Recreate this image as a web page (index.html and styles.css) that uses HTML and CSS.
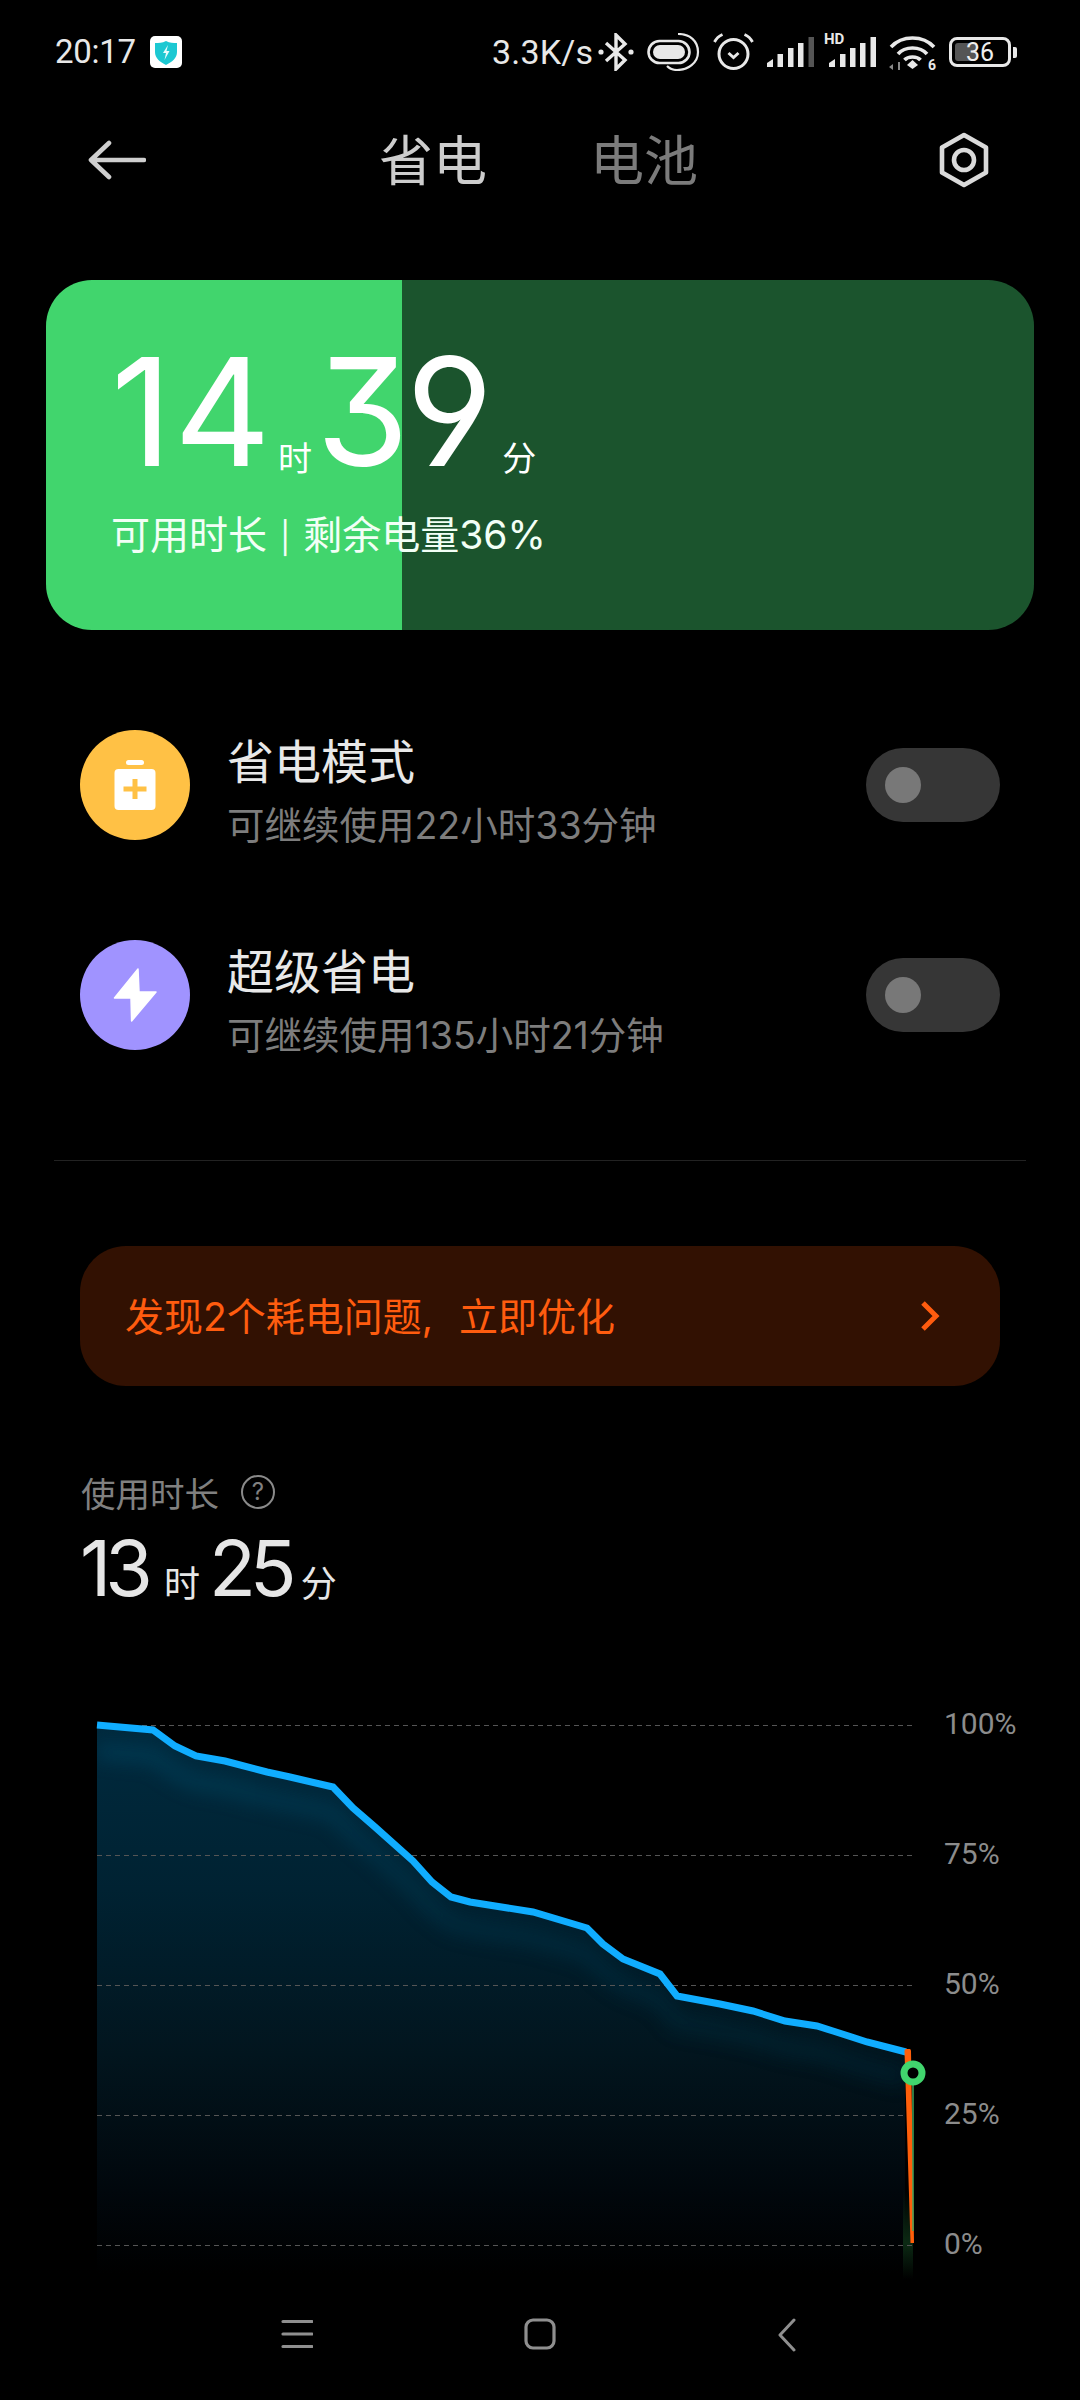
FILE: index.html
```html
<!DOCTYPE html>
<html lang="zh">
<head>
<meta charset="utf-8">
<title>省电</title>
<link rel="stylesheet" href="styles.css">
</head>
<body>
<div class="page">
  <div class="status">
    <span class="clock">20:17</span>
    <span class="shield-box">
      <svg width="32" height="32" viewBox="0 0 32 32"><path d="M16 5 C20 7 23 7 27 7 V16 C27 22 22 26 16 29 C10 26 5 22 5 16 V7 C9 7 12 7 16 5Z" fill="#1cc8d2"/><path d="M18 9 L13 17 H16 L14.5 24 L19.5 15 H16.5Z" fill="#e8fbfc"/></svg>
    </span>
    <span class="status-fill"></span>
    <span class="speed">3.3K/s</span>
    <svg class="st-bt" width="36" height="38" viewBox="0 0 36 38"><path d="M8 10 L27 27 L18 36 V2 L27 11 L8 28" fill="none" stroke="#e8e8e8" stroke-width="3.4"/><circle cx="3" cy="19" r="2.6" fill="#e8e8e8"/><circle cx="33" cy="19" r="2.6" fill="#e8e8e8"/></svg>
    <svg width="53" height="38" viewBox="0 0 53 38"><rect x="1.5" y="8" width="41" height="22" rx="11" fill="none" stroke="#e8e8e8" stroke-width="2.6"/><rect x="6" y="12" width="32" height="14" rx="7" fill="#e8e8e8"/><path d="M31 1 C43 1 51 8 51 19 C51 30 41 37 30 37 C26 37 23 36 20 33" fill="none" stroke="#e8e8e8" stroke-width="2.2"/></svg>
    <svg width="41" height="38" viewBox="0 0 41 38"><circle cx="20.5" cy="21" r="14.5" fill="none" stroke="#e8e8e8" stroke-width="3"/><path d="M15.5 20 L20.5 24.5 L25.5 20" fill="none" stroke="#e8e8e8" stroke-width="3"/><path d="M1.5 9 C3 6 5 3.500 9.500 1.500 M39.500 9 C38 6 36 3.500 31.500 1.500" fill="none" stroke="#e8e8e8" stroke-width="2.8"/></svg>
    <svg width="47" height="32" viewBox="0 0 47 32"><path d="M0 31 V27 L6 23 V31Z M10.500 31 V18 H16 V31Z M21 31 V12 H26.500 V31Z M31 31 V7 H36.500 V31Z" fill="#e8e8e8"/><path d="M41.500 31 V1 H47 V31Z" fill="#555"/></svg>
    <span class="sig-hd">
      <span class="hd">HD</span>
      <svg width="49" height="32" viewBox="0 0 49 32"><path d="M2 31 V27 L8 23 V31Z M13 31 V18 H18.500 V31Z M23 31 V12 H28.500 V31Z M33 31 V7 H38.500 V31Z M43.500 31 V1 H49 V31Z" fill="#e8e8e8"/></svg>
    </span>
    <span class="wifi">
      <svg width="47" height="36" viewBox="0 0 47 36"><path d="M2 13 C13 1 34 1 45 13 M9 20 C16 12 31 12 38 20 M15.500 26 C19 22 28 22 31.500 26" fill="none" stroke="#e8e8e8" stroke-width="3.600"/><path d="M23.500 26 L29 31 L23.500 35 L18 31Z" fill="#e8e8e8"/><path d="M4 30 V36 L0 33Z M9 28 H11 V36 H9Z" fill="#888"/></svg>
      <span class="wifi-six">6</span>
    </span>
    <span class="battery">
      <span class="battery-body"><span class="battery-level"></span><span class="battery-num">36</span></span>
      <span class="battery-nub"></span>
    </span>
  </div>

  <div class="header">
    <svg class="back" width="58" height="40" viewBox="0 0 58 40"><path d="M21 3 L3 20 L21 37 M3 20 H56" fill="none" stroke="#cfcfcf" stroke-width="4.600" stroke-linecap="round" stroke-linejoin="round"/></svg>
    <span class="tab tab-on">省电</span>
    <span class="tab tab-off">电池</span>
    <svg class="gear" width="50" height="56" viewBox="0 0 50 56"><path d="M25 3 L47 15.500 V40.500 L25 53 L3 40.500 V15.500Z" fill="none" stroke="#dadada" stroke-width="4.600" stroke-linejoin="round"/><circle cx="25" cy="28" r="10" fill="none" stroke="#dadada" stroke-width="4.600"/></svg>
  </div>

  <div class="card">
    <div class="card-time">
      <span class="big big-h">14</span><span class="unit unit-h">时</span><span class="big big-m">39</span><span class="unit unit-m">分</span>
    </div>
    <div class="card-sub">可用时长 <span class="sep">|</span> 剩余电量36%</div>
  </div>

  <div class="row row-first">
    <span class="circle circle-yellow">
      <svg width="110" height="110" viewBox="0 0 110 110"><rect x="46" y="30" width="18" height="5" rx="2.500" fill="#fff"/><rect x="34.500" y="39" width="41" height="41" rx="4" fill="#fff"/><path d="M43.500 59 H66.500 M55 49 V69" stroke="#ffc145" stroke-width="5"/></svg>
    </span>
    <div class="row-text">
      <div class="row-title">省电模式</div>
      <div class="row-sub">可继续使用22小时33分钟</div>
    </div>
    <span class="toggle"><span class="knob"></span></span>
  </div>

  <div class="row row-second">
    <span class="circle circle-purple">
      <svg width="110" height="110" viewBox="0 0 110 110"><path d="M58 29 L34.500 58 H51 L51.600 81 L76 52 H59Z" fill="#fff" stroke="#fff" stroke-width="1.500" stroke-linejoin="round"/></svg>
    </span>
    <div class="row-text">
      <div class="row-title">超级省电</div>
      <div class="row-sub">可继续使用135小时21分钟</div>
    </div>
    <span class="toggle"><span class="knob"></span></span>
  </div>

  <div class="divider"></div>

  <div class="banner">
    <span class="banner-text">发现2个耗电问题, 立即优化</span>
    <svg width="20" height="32" viewBox="0 0 20 32"><path d="M3 3 L16 16 L3 29" fill="none" stroke="#ff5c0f" stroke-width="5"/></svg>
  </div>

  <div class="usage-label">
    <span>使用时长</span>
    <span class="help">?</span>
  </div>
  <div class="usage-value">
    <span class="val">13</span><span class="val-unit">时</span><span class="val val-m">25</span><span class="val-unit val-unit-m">分</span>
  </div>

  <svg class="chart" width="1080" height="590" viewBox="0 1700 1080 590">
    <defs>
      <linearGradient id="areaFill" gradientUnits="userSpaceOnUse" x1="0" y1="1726" x2="0" y2="2275">
        <stop offset="0" stop-color="#002a3e"/>
        <stop offset="0.3" stop-color="#002232"/>
        <stop offset="0.6" stop-color="#02151e"/>
        <stop offset="0.85" stop-color="#01070c"/>
        <stop offset="1" stop-color="#000"/>
      </linearGradient>
      <linearGradient id="glowStroke" gradientUnits="userSpaceOnUse" x1="0" y1="1740" x2="0" y2="2090">
        <stop offset="0" stop-color="#064a68"/>
        <stop offset="1" stop-color="#032a3a"/>
      </linearGradient>
      <linearGradient id="greenFade" x1="0" y1="0" x2="0" y2="1">
        <stop offset="0" stop-color="#0c2a14" stop-opacity="0"/>
        <stop offset="0.6" stop-color="#0c2a14"/>
        <stop offset="1" stop-color="#0c2a14" stop-opacity="0"/>
      </linearGradient>
      <filter id="soft" x="-10%" y="-10%" width="120%" height="120%"><feGaussianBlur stdDeviation="9"/></filter>
      <clipPath id="areaClip"><path d="M97 1726 L153 1731 L175 1747 L196 1757 L225 1762 L267 1773 L290 1778 L333 1788 L353 1809 L375 1828 L413 1862 L432 1883 L451 1898 L470 1903 L533 1913 L587 1929 L603 1945 L623 1960 L660 1975 L677 1997 L720 2005 L753 2012 L785 2022 L817 2027 L833 2032 L867 2043 L905 2053 V2280 H97Z"/></clipPath>
    </defs>
    <path d="M97 1726 L153 1731 L175 1747 L196 1757 L225 1762 L267 1773 L290 1778 L333 1788 L353 1809 L375 1828 L413 1862 L432 1883 L451 1898 L470 1903 L533 1913 L587 1929 L603 1945 L623 1960 L660 1975 L677 1997 L720 2005 L753 2012 L785 2022 L817 2027 L833 2032 L867 2043 L905 2053 V2280 H97Z" fill="url(#areaFill)"/>
    <g clip-path="url(#areaClip)">
      <path d="M97 1752 L153 1757 L175 1773 L196 1783 L225 1788 L267 1799 L290 1804 L333 1814 L353 1835 L375 1854 L413 1888 L432 1909 L451 1924 L470 1929 L533 1939 L587 1955 L603 1971 L623 1986 L660 2001 L677 2023 L720 2031 L753 2038 L785 2048 L817 2053 L833 2058 L867 2069 L905 2079" fill="none" stroke="url(#glowStroke)" stroke-width="18" filter="url(#soft)" opacity="0.45"/>
    </g>
    <rect x="903" y="2190" width="10" height="90" fill="url(#greenFade)"/>
    <g class="grid">
      <path d="M97 1726.500 H913"/>
      <path d="M97 1856.500 H913"/>
      <path d="M97 1986.500 H913"/>
      <path d="M97 2116.500 H905"/>
      <path d="M97 2246.500 H913"/>
    </g>
    <path d="M97 1726 L153 1731 L175 1747 L196 1757 L225 1762 L267 1773 L290 1778 L333 1788 L353 1809 L375 1828 L413 1862 L432 1883 L451 1898 L470 1903 L533 1913 L587 1929 L603 1945 L623 1960 L660 1975 L677 1997 L720 2005 L753 2012 L785 2022 L817 2027 L833 2032 L867 2043 L906 2053" fill="none" stroke="#10adff" stroke-width="7"/>
    <path d="M904.500 2052 Q904.500 2050 906 2050 H909.500 Q911 2050 911 2052 L914 2244 H910.500Z" fill="#ff5f0a"/>
    <path d="M913 2074 V2232" stroke="#3fa55c" stroke-width="1.500"/>
    <circle cx="913" cy="2074" r="9" fill="#000" stroke="#41d56d" stroke-width="7"/>
    <text class="axis" x="944" y="1735">100%</text>
    <text class="axis" x="944" y="1865">75%</text>
    <text class="axis" x="944" y="1995">50%</text>
    <text class="axis" x="944" y="2125">25%</text>
    <text class="axis" x="944" y="2255">0%</text>
  </svg>

  <div class="nav">
    <svg class="nav-menu" width="32" height="32" viewBox="0 0 32 32"><path d="M2 3.500 H31 M2 16 H31 M2 28.500 H31" stroke="#8f8f8f" stroke-width="3.200" stroke-linecap="round"/></svg>
    <svg class="nav-home" width="32" height="32" viewBox="0 0 32 32"><rect x="2" y="2" width="28" height="28" rx="7" fill="none" stroke="#8f8f8f" stroke-width="3.200"/></svg>
    <svg class="nav-back" width="18" height="34" viewBox="0 0 18 34"><path d="M16 2 L2 17 L16 32" fill="none" stroke="#8f8f8f" stroke-width="3" stroke-linecap="round" stroke-linejoin="round"/></svg>
  </div>
</div>
</body>
</html>
```

FILE: styles.css
```css
* { box-sizing: border-box; }
html, body { margin: 0; padding: 0; background: #000; }
body { font-family: Inter, "Noto Sans CJK SC", sans-serif; color: #fff; }
.page { width: 1080px; height: 2400px; overflow: hidden; display: flex; flex-direction: column; }
svg { display: block; flex: none; }

.status { height: 104px; flex: none; display: flex; align-items: center; padding: 0 63px 0 55px; gap: 13px; color: #e8e8e8; font-family: Roboto, sans-serif; }
.clock { font-size: 33px; line-height: 40px; width: 80px; letter-spacing: -0.3px; white-space: nowrap; }
.shield-box { width: 32px; height: 32px; background: #fff; border-radius: 5px; margin-left: 2px; }
.status-fill { flex: 1; }
.speed { font-size: 34px; line-height: 40px; width: 99px; margin-right: -6px; letter-spacing: 0.2px; white-space: nowrap; }
.sig-hd { display: flex; width: 49px; height: 32px; position: relative; }
.hd { position: absolute; left: -3px; top: -5px; font-size: 15px; line-height: 16px; font-weight: 700; color: #e8e8e8; }
.wifi { position: relative; width: 47px; height: 36px; }
.wifi-six { position: absolute; right: 0; bottom: -3px; font-size: 14px; line-height: 16px; font-weight: 700; background: #000; padding-left: 1px; }
.battery { display: flex; align-items: center; gap: 2px; }
.battery-body { position: relative; width: 62px; height: 30px; border: 3.4px solid #e8e8e8; border-radius: 8px; display: flex; align-items: center; padding-left: 3px; }
.battery-level { width: 22px; height: 18px; background: #555; border-radius: 3px; }
.battery-num { position: absolute; left: 14px; top: -2px; font-size: 25px; line-height: 29px; color: #eee; }
.battery-nub { width: 4px; height: 11px; background: #e8e8e8; border-radius: 0 2px 2px 0; }

.header { height: 112px; flex: none; display: flex; align-items: center; padding-left: 88px; }
.back { margin-right: 233px; }
.tab { font-size: 54px; line-height: 70px; padding-top: 4px; white-space: nowrap; }
.tab-on { color: #cdcdcd; }
.tab-off { color: #7b7b7b; margin-left: 103px; }
.gear { margin-left: 241px; }

.card { flex: none; margin: 64px 46px 0; height: 350px; border-radius: 46px; padding: 57px 0 0 65px; background: linear-gradient(90deg, #41d56d 0, #41d56d 356px, #1b542d 356px, #1b542d 100%); }
.card-time { display: flex; align-items: flex-end; height: 150px; }
.big { font-family: Inter, sans-serif; font-weight: 400; font-size: 150px; line-height: 150px; font-feature-settings: "cv04", "cv09"; white-space: nowrap; }
.big-h { letter-spacing: 2px; }
.big-m { letter-spacing: -3px; margin-left: 4px; }
.unit { font-size: 34px; line-height: 44px; margin-bottom: 6px; }
.unit-h { margin-left: 5px; }
.unit-m { margin-left: 12px; }
.card-sub { font-size: 39px; line-height: 50px; margin-top: 23px; color: #f2fff6; white-space: nowrap; }
.sep { font-size: 31px; margin: 0 2px; }

.row { flex: none; height: 110px; margin: 0 80px; display: flex; align-items: flex-start; gap: 37px; }
.row-first { margin-top: 100px; }
.row-second { margin-top: 100px; }
.circle { width: 110px; height: 110px; border-radius: 50%; flex: none; }
.circle-yellow { background: #ffc145; }
.circle-purple { background: #a093ff; }
.row-text { flex: 1; padding-top: 2px; }
.row-title { font-size: 47px; line-height: 60px; color: #e8e8e8; white-space: nowrap; }
.row-sub { font-size: 37.500px; line-height: 50px; margin-top: 9px; color: #7d7d7d; white-space: nowrap; }
.toggle { width: 134px; height: 74px; margin-top: 18px; border-radius: 37px; background: #363636; display: flex; align-items: center; padding-left: 19px; flex: none; }
.knob { width: 36px; height: 36px; border-radius: 50%; background: #787878; }

.divider { flex: none; height: 1px; margin: 110px 54px 0; background: #222; }

.banner { flex: none; height: 140px; margin: 85px 80px 0; border-radius: 46px; background: #321102; display: flex; align-items: center; justify-content: space-between; padding: 0 60px 0 45px; }
.banner-text { font-size: 39px; line-height: 50px; padding-top: 2px; word-spacing: 15px; color: #ff5c0f; white-space: nowrap; }

.usage-label { flex: none; display: flex; align-items: center; gap: 22px; margin: 86px 81px 0; height: 40px; font-size: 34.500px; color: #808080; }
.help { width: 34px; height: 34px; border: 2px solid #8a8a8a; border-radius: 50%; font-size: 24px; line-height: 30px; text-align: center; }

.usage-value { flex: none; display: flex; align-items: flex-end; margin: 18px 80px 0; height: 76px; color: #e6e6e6; }
.val { font-size: 77px; line-height: 76px; letter-spacing: -6px; }
.val-m { margin-left: 9px; }
.val-unit { font-size: 36px; line-height: 44px; margin-left: 17px; }
.val-unit-m { margin-left: 10px; }

.chart { flex: none; margin-top: 93px; }
.grid path { stroke: #555; stroke-width: 1; stroke-dasharray: 5 4; fill: none; }
.axis { font-family: Roboto, sans-serif; font-size: 30px; fill: #8c8c8c; }

.nav { flex: 1; display: flex; align-items: flex-start; padding: 29px 0 0 281px; }
.nav-home { margin-left: 211px; }
.nav-back { margin-left: 222px; }
```
